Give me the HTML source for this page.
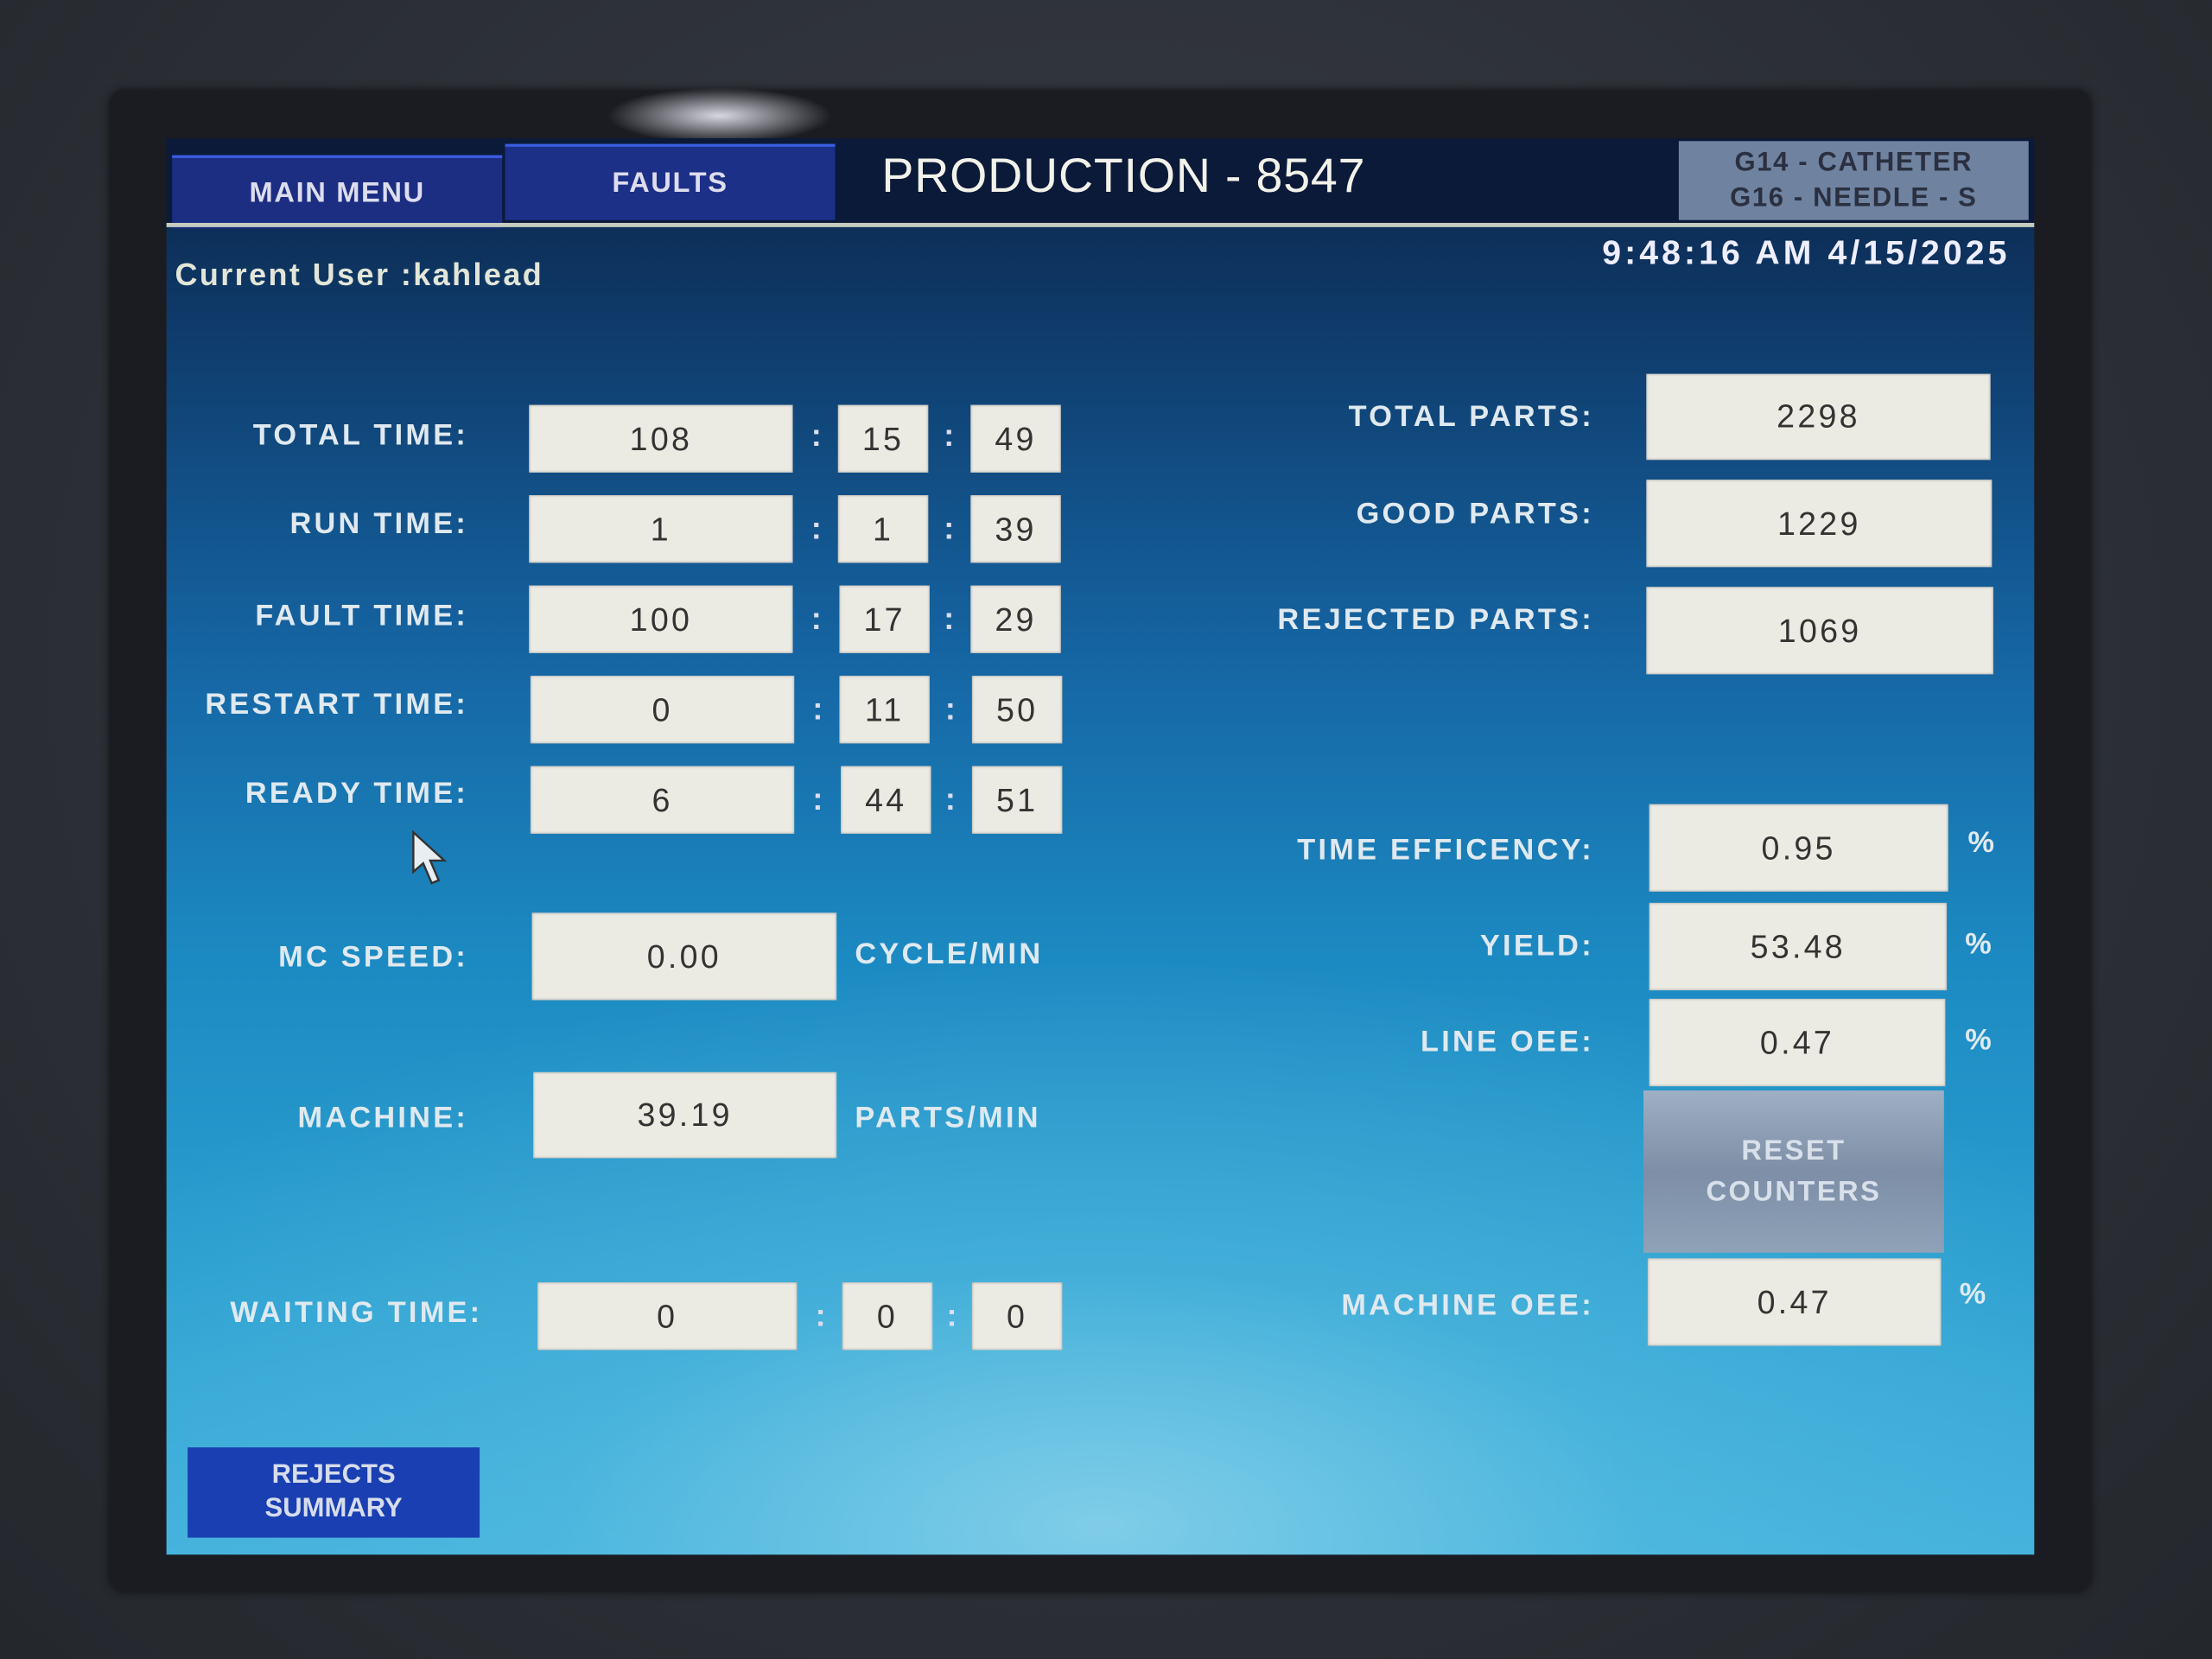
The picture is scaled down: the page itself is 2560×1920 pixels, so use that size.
<!DOCTYPE html>
<html><head><meta charset="utf-8"><style>
html,body{margin:0;padding:0;}
body{width:2560px;height:1920px;overflow:hidden;background:#2b2f35;}
#w{position:absolute;left:0;top:0;width:1568px;height:1176px;transform:scale(1.632653);transform-origin:0 0;font-family:"Liberation Sans",sans-serif;background:radial-gradient(ellipse at 50% 40%,#3a3f46 0%,#2a2e34 70%,#24272c 100%);}
.a{position:absolute;}
#bez{left:78px;top:64px;width:1404px;height:1064px;background:#1b1c22;border-radius:10px;box-shadow:0 0 6px #111;}
#scr{left:118px;top:98px;width:1324px;height:1004px;background:
radial-gradient(ellipse 65% 40% at 50% 98%,#7fcde8 0%,rgba(90,190,225,.5) 45%,rgba(60,160,210,0) 100%),
linear-gradient(180deg,#0b2448 0%,#0f3c6c 14%,#1564a2 36%,#1c8ac2 58%,#2b9fd0 80%,#40b0dc 100%);}
.lbl{position:absolute;color:#dfe9ef;font-weight:bold;font-size:21px;text-align:right;letter-spacing:2px;}
.bx{position:absolute;background:#ecebe3;color:#333;font-size:23px;text-align:center;letter-spacing:2px;box-shadow:inset 0 0 2px #999;}
.col{position:absolute;color:#dde;font-size:22px;font-weight:bold;}
.pc{position:absolute;color:#dfe9ef;font-weight:bold;font-size:21px;letter-spacing:2px;}
</style></head><body><div id="w">
<div class="a" id="bez"></div>
<div class="a" style="left:430px;top:62px;width:160px;height:40px;background:radial-gradient(ellipse,#d8d8e0 0%,rgba(200,200,210,0) 70%);"></div>
<div class="a" id="scr"></div>
<div class="a" style="left:118px;top:98px;width:1324px;height:62px;background:#0b1a38;"></div>
<div class="a" style="left:122px;top:110px;width:234px;height:50px;background:#1b2e82;border-top:2px solid #3a5ee0;color:#dde;font-weight:bold;font-size:20px;text-align:center;line-height:50px;letter-spacing:1px;">MAIN MENU</div>
<div class="a" style="left:358px;top:102px;width:234px;height:52px;background:#1c3088;border-top:2px solid #3a5ee0;color:#dde;font-weight:bold;font-size:20px;text-align:center;line-height:52px;letter-spacing:1px;">FAULTS</div>
<div class="a" style="left:625px;top:106px;color:#f2f2ea;font-size:34px;letter-spacing:0.5px;">PRODUCTION - 8547</div>
<div class="a" style="left:1190px;top:100px;width:248px;height:56px;background:#6f82a0;color:#2a3040;font-weight:bold;font-size:19px;text-align:center;line-height:25px;padding-top:3px;box-sizing:border-box;letter-spacing:1px;">G14 - CATHETER<br>G16 - NEEDLE - S</div>
<div class="a" style="left:118px;top:158px;width:1324px;height:3px;background:#c8ccc0;"></div>
<div class="a" style="left:124px;top:182px;color:#e2e6d8;font-weight:bold;font-size:22px;letter-spacing:1.5px;">Current User :kahlead</div>
<div class="a" style="left:1050px;top:166px;width:375px;text-align:right;color:#eef;font-weight:bold;font-size:24px;letter-spacing:2.5px;">9:48:16 AM 4/15/2025</div>

<div class="lbl" style="left:60px;width:272px;top:297px;">TOTAL TIME:</div>
<div class="lbl" style="left:60px;width:272px;top:360px;">RUN TIME:</div>
<div class="lbl" style="left:60px;width:272px;top:425px;">FAULT TIME:</div>
<div class="lbl" style="left:60px;width:272px;top:488px;">RESTART TIME:</div>
<div class="lbl" style="left:60px;width:272px;top:551px;">READY TIME:</div>
<div class="lbl" style="left:60px;width:272px;top:667px;">MC SPEED:</div>
<div class="lbl" style="left:60px;width:272px;top:781px;">MACHINE:</div>
<div class="lbl" style="left:60px;width:282px;top:919px;">WAITING TIME:</div>

<div class="bx" style="left:375px;top:287px;width:187px;height:48px;line-height:48px;">108</div><div class="col" style="left:575px;top:296px;">:</div><div class="bx" style="left:594px;top:287px;width:64px;height:48px;line-height:48px;">15</div><div class="col" style="left:669px;top:296px;">:</div><div class="bx" style="left:688px;top:287px;width:64px;height:48px;line-height:48px;">49</div>
<div class="bx" style="left:375px;top:351px;width:187px;height:48px;line-height:48px;">1</div><div class="col" style="left:575px;top:362px;">:</div><div class="bx" style="left:594px;top:351px;width:64px;height:48px;line-height:48px;">1</div><div class="col" style="left:669px;top:362px;">:</div><div class="bx" style="left:688px;top:351px;width:64px;height:48px;line-height:48px;">39</div>
<div class="bx" style="left:375px;top:415px;width:187px;height:48px;line-height:48px;">100</div><div class="col" style="left:575px;top:426px;">:</div><div class="bx" style="left:595px;top:415px;width:64px;height:48px;line-height:48px;">17</div><div class="col" style="left:669px;top:426px;">:</div><div class="bx" style="left:688px;top:415px;width:64px;height:48px;line-height:48px;">29</div>
<div class="bx" style="left:376px;top:479px;width:187px;height:48px;line-height:48px;">0</div><div class="col" style="left:576px;top:490px;">:</div><div class="bx" style="left:595px;top:479px;width:64px;height:48px;line-height:48px;">11</div><div class="col" style="left:670px;top:490px;">:</div><div class="bx" style="left:689px;top:479px;width:64px;height:48px;line-height:48px;">50</div>
<div class="bx" style="left:376px;top:543px;width:187px;height:48px;line-height:48px;">6</div><div class="col" style="left:576px;top:554px;">:</div><div class="bx" style="left:596px;top:543px;width:64px;height:48px;line-height:48px;">44</div><div class="col" style="left:670px;top:554px;">:</div><div class="bx" style="left:689px;top:543px;width:64px;height:48px;line-height:48px;">51</div>

<svg class="a" style="left:290px;top:588px;" width="30" height="44" viewBox="0 0 30 44"><path d="M3 2 L3 30 L10 24 L16 38 L21 36 L15 22 L25 22 Z" fill="#e8eef2" stroke="#333" stroke-width="1.5"/></svg>

<div class="bx" style="left:377px;top:647px;width:216px;height:62px;line-height:62px;">0.00</div><div class="pc" style="left:606px;top:665px;">CYCLE/MIN</div>
<div class="bx" style="left:378px;top:760px;width:215px;height:61px;line-height:61px;">39.19</div><div class="pc" style="left:606px;top:781px;">PARTS/MIN</div>

<div class="bx" style="left:381px;top:909px;width:184px;height:48px;line-height:48px;">0</div><div class="col" style="left:578px;top:920px;">:</div><div class="bx" style="left:597px;top:909px;width:64px;height:48px;line-height:48px;">0</div><div class="col" style="left:671px;top:920px;">:</div><div class="bx" style="left:689px;top:909px;width:64px;height:48px;line-height:48px;">0</div>

<div class="lbl" style="left:840px;width:290px;top:284px;">TOTAL PARTS:</div>
<div class="lbl" style="left:840px;width:290px;top:353px;">GOOD PARTS:</div>
<div class="lbl" style="left:840px;width:290px;top:428px;">REJECTED PARTS:</div>
<div class="lbl" style="left:840px;width:290px;top:591px;">TIME EFFICENCY:</div>
<div class="lbl" style="left:840px;width:290px;top:659px;">YIELD:</div>
<div class="lbl" style="left:840px;width:290px;top:727px;">LINE OEE:</div>
<div class="lbl" style="left:840px;width:290px;top:914px;">MACHINE OEE:</div>

<div class="bx" style="left:1167px;top:265px;width:244px;height:61px;line-height:61px;">2298</div>
<div class="bx" style="left:1167px;top:340px;width:245px;height:62px;line-height:62px;">1229</div>
<div class="bx" style="left:1167px;top:416px;width:246px;height:62px;line-height:62px;">1069</div>
<div class="bx" style="left:1169px;top:570px;width:212px;height:62px;line-height:62px;">0.95</div><div class="pc" style="left:1395px;top:586px;">%</div>
<div class="bx" style="left:1169px;top:640px;width:211px;height:62px;line-height:62px;">53.48</div><div class="pc" style="left:1393px;top:658px;">%</div>
<div class="bx" style="left:1169px;top:708px;width:210px;height:62px;line-height:62px;">0.47</div><div class="pc" style="left:1393px;top:726px;">%</div>
<div class="a" style="left:1165px;top:773px;width:213px;height:115px;background:linear-gradient(180deg,#9fb0c4 0%,#7d8ea6 50%,#8fa2b8 100%);color:#d8e0ea;font-weight:bold;font-size:20px;text-align:center;line-height:29px;padding-top:29px;box-sizing:border-box;letter-spacing:1.5px;">RESET<br>COUNTERS</div>
<div class="bx" style="left:1168px;top:892px;width:208px;height:62px;line-height:62px;">0.47</div><div class="pc" style="left:1389px;top:906px;">%</div>

<div class="a" style="left:133px;top:1026px;width:207px;height:64px;background:#1a3fb2;color:#d6dcec;font-weight:bold;font-size:19px;text-align:center;line-height:24px;padding-top:8px;box-sizing:border-box;">REJECTS<br>SUMMARY</div>
</div></body></html>
